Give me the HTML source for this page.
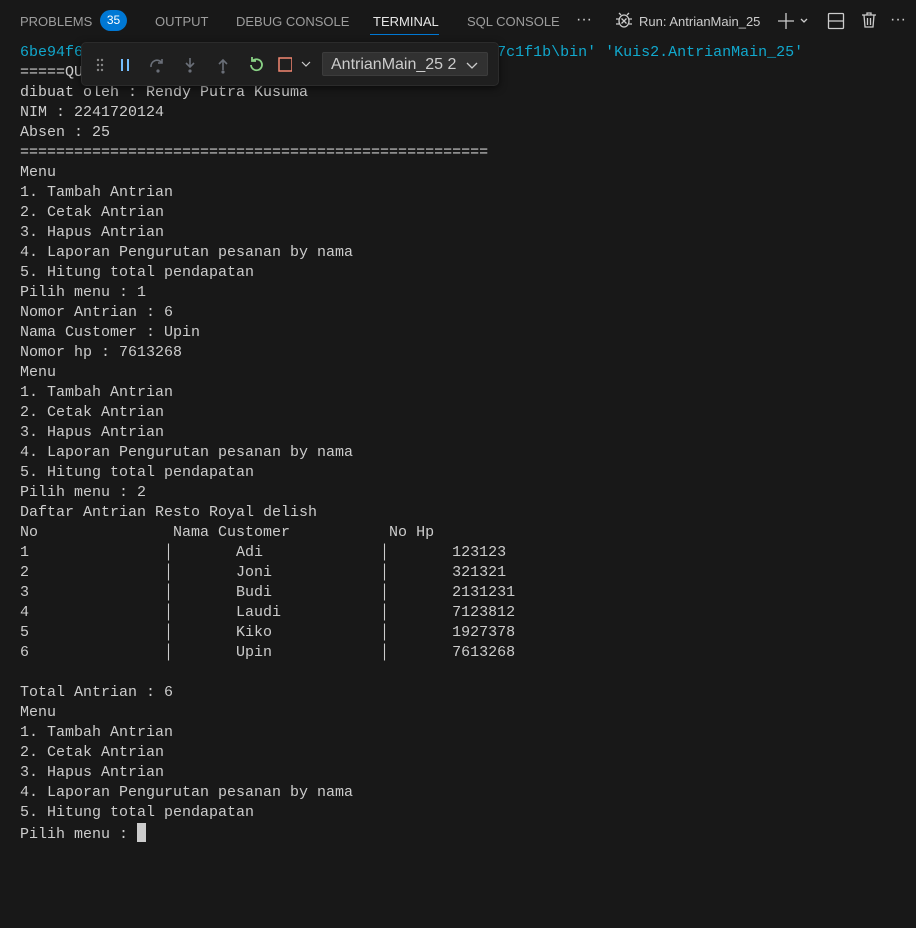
<!DOCTYPE html>
<html><head><style>
body{margin:0;width:916px;height:928px;background:#181818;overflow:hidden;font-family:"Liberation Sans",sans-serif;position:relative}
.tabs{position:absolute;top:0;left:0;right:0;height:40px;font-size:13px;color:#9d9d9d}
.tab{position:absolute;top:14px}
.badge{position:absolute;left:100px;top:10px;width:27px;height:21px;border-radius:11px;background:#0078d4;color:#fff;font-size:12px;text-align:center;line-height:21px}
.ul{position:absolute;left:370px;top:34px;width:69px;height:1px;background:#0078d4}
pre{position:absolute;left:20px;top:43px;margin:0;font-family:"Liberation Mono",monospace;font-size:15px;line-height:20px;color:#cccccc}
.b{color:#11a8cd}
.cur{display:inline-block;width:9px;height:19px;background:#cccccc;vertical-align:-4px}
.dbg{position:absolute;left:81px;top:42px;width:416px;height:42px;background:#1f1f1f;border:1px solid #2b2b2b;border-radius:5px;box-shadow:0 2px 8px rgba(0,0,0,.6)}
.sel{position:absolute;left:240px;top:9px;width:166px;height:24px;background:#313131;border:1px solid #3c3c3c;border-radius:2px;color:#ccc;font-size:16px;line-height:24px;padding-left:8px;box-sizing:border-box}
</style></head><body>
<div class="tabs">
<span class="tab" style="left:20px">PROBLEMS</span>
<div class="badge">35</div>
<span class="tab" style="left:155px">OUTPUT</span>
<span class="tab" style="left:236px">DEBUG CONSOLE</span>
<span class="tab" style="left:373px;color:#e7e7e7">TERMINAL</span>
<span class="tab" style="left:467px">SQL CONSOLE</span>
<span class="tab" style="left:576px;top:11px;font-size:16px;color:#ccc">···</span>
<svg style="position:absolute;left:614px;top:10px" width="20" height="20" viewBox="0 0 20 20" fill="none" stroke="#ccc" stroke-width="1.3"><ellipse cx="10" cy="11" rx="5" ry="6"/><path d="M7 5l-2-2M13 5l2-2M5 9H2M15 9h3M5 14H2M15 14h3M7.5 8.5l5 5M12.5 8.5l-5 5"/></svg>
<span class="tab" style="left:639px;color:#ccc">Run: AntrianMain_25</span>
<svg style="position:absolute;left:777px;top:11px" width="40" height="20" viewBox="0 0 40 20" fill="none" stroke="#ccc" stroke-width="1.3"><path d="M9 2v16M1 10h16M24 8l3 3 3-3"/></svg>
<svg style="position:absolute;left:826px;top:11px" width="20" height="20" viewBox="0 0 20 20" fill="none" stroke="#ccc" stroke-width="1.3"><rect x="2.5" y="2.5" width="15" height="15" rx="1"/><path d="M2.5 10h15"/></svg>
<svg style="position:absolute;left:859px;top:10px" width="20" height="20" viewBox="0 0 20 20" fill="none" stroke="#ccc" stroke-width="1.3"><path d="M3 5h14M8 5V3h4v2M5 5l1 12h8l1-12M8.5 8v7M11.5 8v7"/></svg>
<span class="tab" style="left:890px;top:11px;font-size:16px;color:#ccc">···</span>
<div class="ul"></div>
</div>
<pre><span class="b">6be94f6                                              7c1f1b\bin' 'Kuis2.AntrianMain_25'</span>
=====QU
dibuat oleh : Rendy Putra Kusuma
NIM : 2241720124
Absen : 25
====================================================
Menu
1. Tambah Antrian
2. Cetak Antrian
3. Hapus Antrian
4. Laporan Pengurutan pesanan by nama
5. Hitung total pendapatan
Pilih menu : 1
Nomor Antrian : 6
Nama Customer : Upin
Nomor hp : 7613268
Menu
1. Tambah Antrian
2. Cetak Antrian
3. Hapus Antrian
4. Laporan Pengurutan pesanan by nama
5. Hitung total pendapatan
Pilih menu : 2
Daftar Antrian Resto Royal delish
No               Nama Customer           No Hp
1               │       Adi             │       123123
2               │       Joni            │       321321
3               │       Budi            │       2131231
4               │       Laudi           │       7123812
5               │       Kiko            │       1927378
6               │       Upin            │       7613268

Total Antrian : 6
Menu
1. Tambah Antrian
2. Cetak Antrian
3. Hapus Antrian
4. Laporan Pengurutan pesanan by nama
5. Hitung total pendapatan
Pilih menu : <span class="cur"></span></pre>
<div class="dbg">
<svg style="position:absolute;left:10px;top:12px" width="200" height="20" viewBox="0 0 200 20">
<g fill="#888"><circle cx="6" cy="5" r="1.2"/><circle cx="10" cy="5" r="1.2"/><circle cx="6" cy="10" r="1.2"/><circle cx="10" cy="10" r="1.2"/><circle cx="6" cy="15" r="1.2"/><circle cx="10" cy="15" r="1.2"/></g>
<path d="M30 4v12M36 4v12" stroke="#75beff" stroke-width="2"/>
<path d="M59 12a6 6 0 0 1 11-4M70 4v4h-4" stroke="#6a6f78" stroke-width="1.6" fill="none"/><circle cx="66" cy="16" r="1.6" fill="#6a6f78"/>
<path d="M98 3v9M94 8l4 4 4-4" stroke="#6a6f78" stroke-width="1.6" fill="none"/><circle cx="98" cy="16" r="1.6" fill="#6a6f78"/>
<path d="M131 15V5M127 9l4-4 4 4" stroke="#6a6f78" stroke-width="1.6" fill="none"/><circle cx="131" cy="17" r="1.6" fill="#6a6f78"/>
<path d="M159 10a5.5 5.5 0 1 0 2-4.5M160 2v4h4" stroke="#89d185" stroke-width="1.8" fill="none"/>
<rect x="187" y="3" width="13" height="13" fill="none" stroke="#f48771" stroke-width="1.5"/>
</svg>
<svg style="position:absolute;left:218px;top:16px" width="12" height="10" viewBox="0 0 12 10"><path d="M2 3l4 4 4-4" stroke="#ccc" fill="none" stroke-width="1.2"/></svg>
<div class="sel">AntrianMain_25 2<svg style="position:absolute;right:8px;top:8px" width="14" height="10" viewBox="0 0 14 10"><path d="M2 2l5 5 5-5" stroke="#ccc" fill="none" stroke-width="1.3"/></svg></div>
</div>
</body></html>
